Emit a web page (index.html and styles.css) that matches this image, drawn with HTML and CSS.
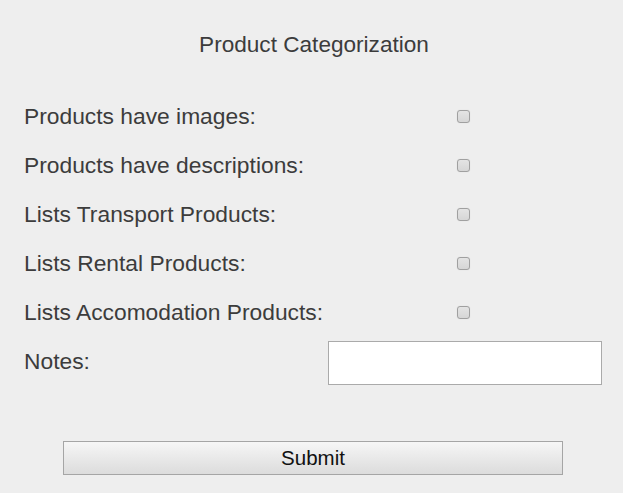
FILE: index.html
```html
<!DOCTYPE html>
<html>
<head>
<meta charset="utf-8">
<link rel="stylesheet" href="styles.css">
</head>
<body>
<form class="form">
  <h1 class="title">Product Categorization</h1>
  <div class="rows">
    <label class="label">Products have images:</label>
    <div class="cell"><input type="checkbox" class="check"></div>
    <label class="label">Products have descriptions:</label>
    <div class="cell"><input type="checkbox" class="check"></div>
    <label class="label">Lists Transport Products:</label>
    <div class="cell"><input type="checkbox" class="check"></div>
    <label class="label">Lists Rental Products:</label>
    <div class="cell"><input type="checkbox" class="check"></div>
    <label class="label">Lists Accomodation Products:</label>
    <div class="cell"><input type="checkbox" class="check"></div>
    <label class="label">Notes:</label>
    <div class="cell cell-notes"><input type="text" class="notes"></div>
  </div>
  <div class="actions">
    <button type="button" class="submit">Submit</button>
  </div>
</form>
</body>
</html>
```

FILE: styles.css
```css
html, body {
  margin: 0;
  padding: 0;
  background: #eeeeee;
}
body {
  width: 623px;
  height: 493px;
  overflow: hidden;
  font-family: "Liberation Sans", Arial, sans-serif;
  color: #3c3c3c;
}
.form {
  display: flex;
  flex-direction: column;
  padding-top: 30px;
}
.title {
  margin: 0;
  font-size: 22.6px;
  font-weight: normal;
  line-height: 30px;
  text-align: center;
  padding-left: 5px;
}
.rows {
  display: grid;
  grid-template-columns: 304px 274px;
  grid-auto-rows: 49px;
  padding-left: 24px;
  margin-top: 32px;
}
.label {
  font-size: 22.8px;
  line-height: 49px;
  white-space: nowrap;
}
.cell {
  display: flex;
  align-items: center;
  justify-content: center;
  padding-right: 4px;
}
.cell-notes {
  padding-right: 0;
  padding-top: 2px;
}
.check {
  appearance: none;
  -webkit-appearance: none;
  width: 13px;
  height: 13px;
  margin: 0;
  border: 1px solid #a0a0a0;
  border-radius: 3px;
  background: linear-gradient(#e4e4e4, #d6d6d6);
  box-shadow: 0 0 1px rgba(0,0,0,0.15);
}
.notes {
  box-sizing: border-box;
  width: 274px;
  height: 44px;
  margin: 0;
  border: 1px solid #aaaaaa;
  background: #ffffff;
  padding: 0 6px;
  font-size: 16px;
  font-family: "Liberation Sans", Arial, sans-serif;
}
.actions {
  margin-top: 55px;
  padding-left: 63px;
}
.submit {
  box-sizing: border-box;
  width: 500px;
  height: 34px;
  border: 1px solid #a5a5a5;
  border-radius: 0;
  background: linear-gradient(#f6f6f6, #dcdcdc);
  font-family: "Liberation Sans", Arial, sans-serif;
  font-size: 20.5px;
  color: #111111;
  padding: 0;
}
```
